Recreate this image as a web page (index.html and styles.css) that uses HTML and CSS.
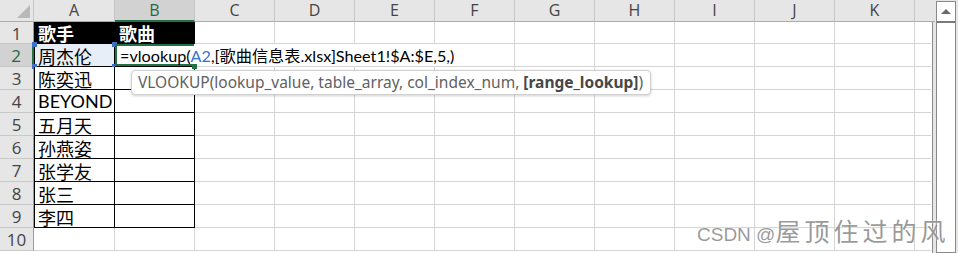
FILE: index.html
```html
<!DOCTYPE html>
<html lang="zh-CN">
<head>
  <meta charset="UTF-8">
  <title>vlookup</title>
  <link rel="stylesheet" href="styles.css">
</head>
<body>
  <div class="app">
    <div class="sheet">
      <div class="hdr">
        <div class="corner"><span class="tri"></span></div>
        <div class="ch col-a">A</div>
        <div class="ch sel">B</div>
        <div class="ch">C</div>
        <div class="ch">D</div>
        <div class="ch">E</div>
        <div class="ch">F</div>
        <div class="ch">G</div>
        <div class="ch">H</div>
        <div class="ch">I</div>
        <div class="ch">J</div>
        <div class="ch">K</div>
        <div class="ch col-l"></div>
      </div>
      <div class="grid">
        <div class="row r1">
          <div class="rh">1</div>
          <div class="c a tb dark">歌手</div>
          <div class="c tb dark">歌曲</div>
          <div class="c"></div><div class="c"></div><div class="c"></div><div class="c"></div><div class="c"></div><div class="c"></div><div class="c"></div><div class="c"></div><div class="c"></div><div class="c l"></div>
        </div>
        <div class="row">
          <div class="rh sel">2</div>
          <div class="c a tb ref">周杰伦
            <span class="hd tl"></span><span class="hd tr"></span><span class="hd bl"></span><span class="hd br"></span>
          </div>
          <div class="c tb edit">=vlookup(<span class="blue">A2</span>,[歌曲信息表.xlsx]Sheet1!$A:$E,5,)<span class="fill"></span></div>
          <div class="c under"></div><div class="c under"></div><div class="c under"></div><div class="c"></div><div class="c"></div><div class="c"></div><div class="c"></div><div class="c"></div><div class="c"></div><div class="c l"></div>
        </div>
        <div class="row">
          <div class="rh">3</div>
          <div class="c a tb">陈奕迅</div>
          <div class="c tb"></div>
          <div class="c"></div><div class="c"></div><div class="c"></div><div class="c"></div><div class="c"></div><div class="c"></div><div class="c"></div><div class="c"></div><div class="c"></div><div class="c l"></div>
        </div>
        <div class="row">
          <div class="rh">4</div>
          <div class="c a tb latin">BEYOND</div>
          <div class="c tb"></div>
          <div class="c"></div><div class="c"></div><div class="c"></div><div class="c"></div><div class="c"></div><div class="c"></div><div class="c"></div><div class="c"></div><div class="c"></div><div class="c l"></div>
        </div>
        <div class="row">
          <div class="rh">5</div>
          <div class="c a tb">五月天</div>
          <div class="c tb"></div>
          <div class="c"></div><div class="c"></div><div class="c"></div><div class="c"></div><div class="c"></div><div class="c"></div><div class="c"></div><div class="c"></div><div class="c"></div><div class="c l"></div>
        </div>
        <div class="row">
          <div class="rh">6</div>
          <div class="c a tb">孙燕姿</div>
          <div class="c tb"></div>
          <div class="c"></div><div class="c"></div><div class="c"></div><div class="c"></div><div class="c"></div><div class="c"></div><div class="c"></div><div class="c"></div><div class="c"></div><div class="c l"></div>
        </div>
        <div class="row">
          <div class="rh">7</div>
          <div class="c a tb">张学友</div>
          <div class="c tb"></div>
          <div class="c"></div><div class="c"></div><div class="c"></div><div class="c"></div><div class="c"></div><div class="c"></div><div class="c"></div><div class="c"></div><div class="c"></div><div class="c l"></div>
        </div>
        <div class="row">
          <div class="rh">8</div>
          <div class="c a tb">张三</div>
          <div class="c tb"></div>
          <div class="c"></div><div class="c"></div><div class="c"></div><div class="c"></div><div class="c"></div><div class="c"></div><div class="c"></div><div class="c"></div><div class="c"></div><div class="c l"></div>
        </div>
        <div class="row">
          <div class="rh">9</div>
          <div class="c a tb">李四</div>
          <div class="c tb"></div>
          <div class="c"></div><div class="c"></div><div class="c"></div><div class="c"></div><div class="c"></div><div class="c"></div><div class="c"></div><div class="c"></div><div class="c"></div><div class="c l"></div>
        </div>
        <div class="row">
          <div class="rh">10</div>
          <div class="c a"></div>
          <div class="c"></div>
          <div class="c"></div><div class="c"></div><div class="c"></div><div class="c"></div><div class="c"></div><div class="c"></div><div class="c"></div><div class="c"></div><div class="c"></div><div class="c l"></div>
        </div>
      </div>
    </div>
    <div class="vscroll">
      <div class="up"><span class="arrow"></span></div>
      <div class="thumb"></div>
    </div>
  </div>

  <div class="tip">VLOOKUP(lookup_value, table_array, col_index_num, <b>[range_lookup]</b>)</div>
  <div class="mark"><span class="lat">CSDN @</span><span class="cjk">屋顶住过的风</span></div>
</body>
</html>
```

FILE: styles.css
```css
body {
  margin: 0;
  width: 958px;
  height: 253px;
  overflow: hidden;
  position: relative;
  background: #e6e6e6;
  font-family: "Noto Sans CJK SC", "Noto Sans", sans-serif;
  color: #000;
}
.app {
  display: flex;
  height: 253px;
}
.sheet {
  width: 936px;
  display: flex;
  flex-direction: column;
}

/* column letters */
.hdr {
  display: flex;
  height: 22px;
  flex-shrink: 0;
}
.corner {
  width: 34px;
  box-sizing: border-box;
  border-right: 1px solid #c6c6c6;
  border-bottom: 1px solid #ababab;
  position: relative;
}
.tri {
  position: absolute;
  right: 3px;
  bottom: 3px;
  width: 0;
  height: 0;
  border-left: 13px solid transparent;
  border-bottom: 13px solid #b8b8b8;
}
.ch {
  width: 80px;
  box-sizing: border-box;
  border-right: 1px solid #c6c6c6;
  border-bottom: 1px solid #ababab;
  text-align: center;
  font-family: "Open Sans", sans-serif;
  font-size: 16px;
  line-height: 21px;
  color: #444;
}
.ch.col-a { width: 81px; }
.ch.col-l { width: 20px; border-right: none; }
.ch.sel {
  background: #d2d2d2;
  color: #1e6b43;
  border-bottom: 2px solid #217346;
}

/* cells */
.grid {
  width: 933px;
  box-sizing: border-box;
  border-right: 1px solid #8c8c8c;
  flex: 1;
  overflow: hidden;
  background: #fff;
}
.row {
  display: flex;
  height: 23px;
}
.row.r1 { height: 22px; }
.rh {
  width: 34px;
  flex-shrink: 0;
  box-sizing: border-box;
  background: #e6e6e6;
  border-right: 1px solid #9a9a9a;
  border-bottom: 1px solid #c8c8c8;
  text-align: center;
  font-family: "Open Sans", sans-serif;
  font-size: 17px;
  line-height: 23px;
  color: #444;
}
.rh.sel {
  background: #d2d2d2;
  color: #1e6b43;
  border-right: 2px solid #217346;
}
.c {
  width: 80px;
  flex-shrink: 0;
  box-sizing: border-box;
  border-right: 1px solid #d4d4d4;
  border-bottom: 1px solid #d4d4d4;
  background: #fff;
  font-size: 18px;
  line-height: 20px;
  padding: 2px 0 0 4px;
  white-space: nowrap;
  position: relative;
}
.c.a { width: 81px; }
.c.l { width: 16px; border-right: none; }
.c.latin {
  font-family: "Lato", sans-serif;
  padding-top: 0;
  line-height: 23px;
}
.c.tb {
  border-right-color: #000;
  border-bottom-color: #000;
}
.c.a.tb { box-shadow: inset 1px 0 0 #000; }
.c.dark {
  background: #000;
  color: #fff;
  font-weight: 700;
  padding-top: 1px;
}
.c.under { border-right-color: transparent; background: transparent; }

/* reference range A2 */
.c.ref {
  background: #e8eef8;
  box-shadow: inset 0 0 0 2px #3f6fc4;
}
.hd {
  position: absolute;
  width: 5px;
  height: 5px;
  background: #3f6fc4;
}
.hd.tl { left: -2px; top: -2px; }
.hd.tr { right: -3px; top: -2px; }
.hd.bl { left: -2px; bottom: -3px; }
.hd.br { right: -3px; bottom: -3px; }

/* cell being edited */
.c.edit {
  z-index: 2;
  overflow: visible;
  border-right-color: transparent;
  box-shadow: inset 2px 0 0 #217346, inset 0 2px 0 #217346, inset 0 -2px 0 #217346;
  padding: 0 0 0 5px;
  font-family: "Lato", "Noto Sans CJK SC", sans-serif;
  font-size: 16.2px;
  line-height: 23px;
}
.blue { color: #3a6fd0; }
.fill {
  position: absolute;
  right: -3px;
  bottom: -3px;
  width: 5px;
  height: 5px;
  background: #217346;
}

/* scrollbar */
.vscroll {
  width: 20px;
  margin-top: 1px;
  box-sizing: border-box;
  border: 1px solid #8a8a8a;
  background: #fff;
  display: flex;
  flex-direction: column;
}
.up {
  height: 19px;
  border-bottom: 2px solid #7a7a7a;
  display: flex;
  align-items: center;
  justify-content: center;
}
.arrow {
  width: 0;
  height: 0;
  border-left: 5px solid transparent;
  border-right: 5px solid transparent;
  border-bottom: 5px solid #6a6a6a;
}
.thumb { flex: 1; }

/* function tooltip */
.tip {
  position: absolute;
  left: 131px;
  top: 70px;
  width: 520px;
  height: 25px;
  box-sizing: border-box;
  background: #fff;
  border: 1px solid #cfcfcf;
  border-radius: 4px;
  box-shadow: 0 1px 3px rgba(0, 0, 0, 0.18);
  padding-left: 6px;
  font-family: "Noto Sans", sans-serif;
  font-size: 15.5px;
  line-height: 22px;
  color: #616161;
  white-space: nowrap;
}
.tip b { color: #474747; }

/* watermark */
.mark {
  position: absolute;
  left: 697px;
  top: 212px;
  color: rgba(120, 120, 120, 0.75);
  text-shadow: 0 0 2px #fff;
  white-space: nowrap;
}
.mark .lat {
  font-family: "Liberation Sans", sans-serif;
  font-size: 19px;
}
.mark .cjk {
  font-size: 25px;
  letter-spacing: 4px;
}
```
